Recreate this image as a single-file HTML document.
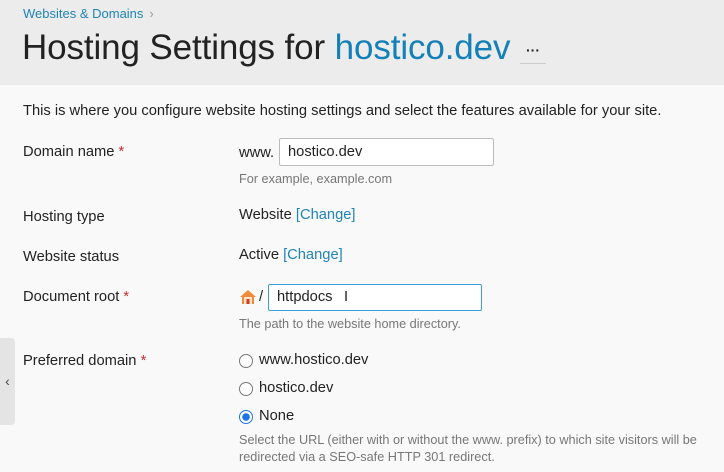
<!DOCTYPE html>
<html><head><style>
body{margin:0;width:724px;height:472px;overflow:hidden;background:#f9f9f9;font-family:"Liberation Sans",sans-serif;color:#222;position:relative}
.hdr{position:absolute;left:0;top:0;width:724px;height:85px;background:#ececec}
.bc{position:absolute;left:23px;top:6px;font-size:13px;color:#1f84b6}
.bc span{color:#999;margin-left:6px}
h1{position:absolute;left:22px;top:28px;margin:0;font-weight:normal;color:#222;letter-spacing:-0.12px;font-size:35px}
h1 b{font-weight:normal;color:#1380b8}
.dots{position:absolute;left:520px;top:44px;width:26px;height:19px;border-bottom:1px solid #ccc;font-size:14px;text-align:center;line-height:12px;font-weight:bold}
.t{position:absolute;font-size:14.7px;white-space:nowrap}
.s{position:absolute;font-size:12.7px;color:#777;white-space:nowrap}
.r{color:#d02d2d}
a{color:#1f84b6;text-decoration:none}
.in{position:absolute;background:#fff;border:1px solid #bbb;border-radius:2px;font-size:14.7px;padding-left:8px;box-sizing:border-box}
.rad{position:absolute;left:239px;width:12px;height:12px;border:1px solid #777;border-radius:50%;background:#fff}
.tab{position:absolute;left:0;top:338px;width:15px;height:87px;background:#e4e4e4;border-radius:0 4px 4px 0;font-size:14px;color:#444;line-height:87px;text-align:center}
</style></head><body>
<div class="hdr"></div>
<div class="bc">Websites &amp; Domains<span>›</span></div>
<h1>Hosting Settings for <b>hostico.dev</b></h1>
<div class="dots">···</div>
<div class="t" style="left:23px;top:103px">This is where you configure website hosting settings and select the features available for your site.</div>
<div class="t" style="left:23px;top:144px">Domain name <span class="r">*</span></div>
<div class="t" style="left:239px;top:145px">www.</div>
<div class="in" style="left:279px;top:138px;width:215px;height:28px;line-height:26px">hostico.dev</div>
<div class="s" style="left:239px;top:172px">For example, example.com</div>
<div class="t" style="left:23px;top:209px">Hosting type</div>
<div class="t" style="left:239px;top:207px">Website <a>[Change]</a></div>
<div class="t" style="left:23px;top:249px">Website status</div>
<div class="t" style="left:239px;top:247px">Active <a>[Change]</a></div>
<div class="t" style="left:23px;top:289px">Document root <span class="r">*</span></div>
<svg style="position:absolute;left:239px;top:289px" width="18" height="16" viewBox="0 0 18 16"><path d="M9 1L1 8h2v7h12V8h2z" fill="#f08a3c"/><rect x="5" y="8" width="8" height="7" fill="#fbe3c8"/><rect x="7.5" y="10" width="3" height="5" fill="#d23a1f"/></svg>
<div class="t" style="left:259px;top:289px">/</div>
<div class="in" style="left:268px;top:284px;width:214px;height:27px;line-height:25px;border-color:#3c9fd6">httpdocs <span style="position:absolute;left:75px;top:0;font-weight:normal">I</span></div>
<div class="s" style="left:239px;top:317px">The path to the website home directory.</div>
<div class="t" style="left:23px;top:353px">Preferred domain <span class="r">*</span></div>
<div class="rad" style="top:354px"></div><div class="t" style="left:259px;top:352px">www.hostico.dev</div>
<div class="rad" style="top:382px"></div><div class="t" style="left:259px;top:380px">hostico.dev</div>
<div class="rad" style="top:410px;border-color:#1a73e8;background:radial-gradient(circle,#1a73e8 0 3.5px,#fff 4px)"></div><div class="t" style="left:259px;top:408px">None</div>
<div class="s" style="left:239px;top:432px;line-height:17px">Select the URL (either with or without the www. prefix) to which site visitors will be<br>redirected via a SEO-safe HTTP 301 redirect.</div>
<div class="tab">‹</div>
</body></html>
